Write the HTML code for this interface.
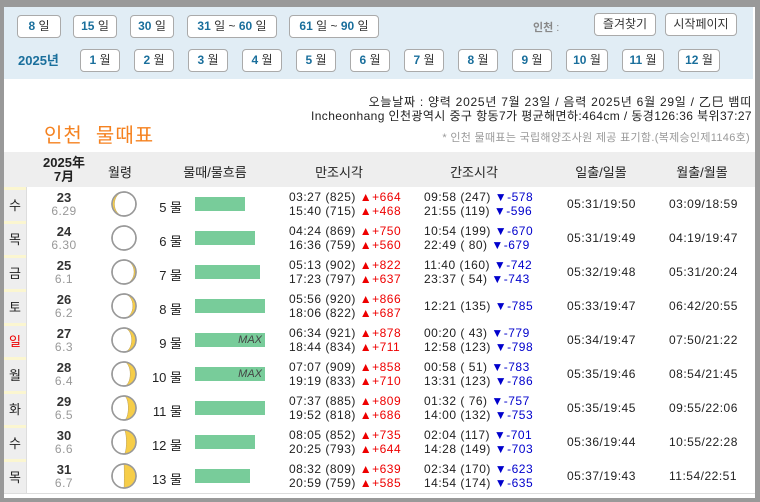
<!DOCTYPE html>
<html><head><meta charset="utf-8"><style>
*{margin:0;padding:0;box-sizing:border-box}
body{width:760px;height:502px;background:#999;position:relative;overflow:hidden;font-family:"Liberation Sans","Noto Sans CJK KR",sans-serif;font-size:12px;color:#222}
.a{position:absolute;white-space:pre}
#wrap{position:absolute;left:4px;top:7px;width:751px;height:491px;background:#fff}
#top{position:absolute;left:0;top:0;width:749px;height:72px;background:#e1edf5}
.b{position:absolute;height:23px;border:1px solid #aaa;border-radius:4px;background:#fff;text-align:center;line-height:21px;font-size:12px;color:#333}
.b b{color:#1a6f9c}
.hdr{position:absolute;left:0;top:145px;width:751px;height:35px;background:#eee}
.dc{position:absolute;left:0;width:22px;height:34px;background:#eee;text-align:center;line-height:32px;font-size:13px;border-top:3px solid #fbf6d0}
.h{position:absolute;text-align:center;font-size:13px;color:#222}
.bar{position:absolute;height:14px;background:#78cc9a;font-style:italic;color:#444;font-size:11px;text-align:right;padding-right:3px;line-height:14px}
.r{color:#e00}.bl{color:#00c}
.t{font-size:12px;letter-spacing:0.5px}
</style></head><body>
<div id="wrap">
<div id="top">
<div class="b" style="left:13px;top:8px;width:44px"><b>8</b> 일</div>
<div class="b" style="left:69px;top:8px;width:44px"><b>15</b> 일</div>
<div class="b" style="left:126px;top:8px;width:44px"><b>30</b> 일</div>
<div class="b" style="left:183px;top:8px;width:90px"><b>31</b> 일 ~ <b>60</b> 일</div>
<div class="b" style="left:285px;top:8px;width:90px"><b>61</b> 일 ~ <b>90</b> 일</div>
<div class="a" style="left:529px;top:12px;color:#888;font-size:11px;font-weight:bold">인천 <span style="font-weight:normal">:</span></div>
<div class="b" style="left:590px;top:6px;width:62px">즐겨찾기</div>
<div class="b" style="left:661px;top:6px;width:72px">시작페이지</div>
<div class="a" style="left:14px;top:43px;color:#1a6f9c;font-weight:bold;font-size:13px">2025년</div>
<div class="b" style="left:76px;top:42px;width:40px"><b>1</b> 월</div>
<div class="b" style="left:130px;top:42px;width:40px"><b>2</b> 월</div>
<div class="b" style="left:184px;top:42px;width:40px"><b>3</b> 월</div>
<div class="b" style="left:238px;top:42px;width:40px"><b>4</b> 월</div>
<div class="b" style="left:292px;top:42px;width:40px"><b>5</b> 월</div>
<div class="b" style="left:346px;top:42px;width:40px"><b>6</b> 월</div>
<div class="b" style="left:400px;top:42px;width:40px"><b>7</b> 월</div>
<div class="b" style="left:454px;top:42px;width:40px"><b>8</b> 월</div>
<div class="b" style="left:508px;top:42px;width:40px"><b>9</b> 월</div>
<div class="b" style="left:562px;top:42px;width:42px"><b>10</b> 월</div>
<div class="b" style="left:618px;top:42px;width:42px"><b>11</b> 월</div>
<div class="b" style="left:674px;top:42px;width:42px"><b>12</b> 월</div>
</div>
<div class="a" style="right:3px;top:86px;font-size:12px;letter-spacing:0.75px">오늘날짜 : 양력 2025년 7월 23일 / 음력 2025년 6월 29일 / 乙巳 뱀띠</div>
<div class="a" style="right:3px;top:100px;font-size:12px;letter-spacing:0.4px">Incheonhang 인천광역시 중구 항동7가 평균해면하:464cm / 동경126:36 북위37:27</div>
<div class="a" style="left:40px;top:112px;font-size:20px;color:#f58220;letter-spacing:1px">인천  물때표</div>
<div class="a" style="right:5px;top:122px;font-size:11px;color:#999;letter-spacing:0.3px">* 인천 물때표는 국립해양조사원 제공 표기함.(복제승인제1146호)</div>
<div class="hdr"></div>
<div class="h" style="left:36px;top:149px;width:48px;font-weight:bold;line-height:14px">2025年<br>7月</div>
<div class="h" style="left:96px;top:155px;width:40px">월령</div>
<div class="h" style="left:166px;top:155px;width:90px">물때/물흐름</div>
<div class="h" style="left:300px;top:155px;width:70px">만조시각</div>
<div class="h" style="left:435px;top:155px;width:70px">간조시각</div>
<div class="h" style="left:562px;top:155px;width:70px">일출/일몰</div>
<div class="h" style="left:663px;top:155px;width:70px">월출/월몰</div>
<div style="position:absolute;left:22px;top:180px;width:1px;height:306px;background:#ddd"></div>
<div style="position:absolute;left:0;top:486px;width:751px;height:1px;background:#ddd"></div>
<div id="rows"></div>
</div>
<script>
var d=[["수","23","6.29",5,50,["03:27 (825)","+664","15:40 (715)","+468"],["09:58 (247)","-578","21:55 (119)","-596"],"05:31/19:50","03:09/18:59",-0.1],
["목","24","6.30",6,60,["04:24 (869)","+750","16:36 (759)","+560"],["10:54 (199)","-670","22:49 ( 80)","-679"],"05:31/19:49","04:19/19:47",0],
["금","25","6.1",7,65,["05:13 (902)","+822","17:23 (797)","+637"],["11:40 (160)","-742","23:37 ( 54)","-743"],"05:32/19:48","05:31/20:24",0.08],
["토","26","6.2",8,70,["05:56 (920)","+866","18:06 (822)","+687"],["12:21 (135)","-785"],"05:33/19:47","06:42/20:55",0.13],
["일","27","6.3",9,70,["06:34 (921)","+878","18:44 (834)","+711"],["00:20 ( 43)","-779","12:58 (123)","-798"],"05:34/19:47","07:50/21:22",0.18],
["월","28","6.4",10,70,["07:07 (909)","+858","19:19 (833)","+710"],["00:58 ( 51)","-783","13:31 (123)","-786"],"05:35/19:46","08:54/21:45",0.24],
["화","29","6.5",11,70,["07:37 (885)","+809","19:52 (818)","+686"],["01:32 ( 76)","-757","14:00 (132)","-753"],"05:35/19:45","09:55/22:06",0.32],
["수","30","6.6",12,60,["08:05 (852)","+735","20:25 (793)","+644"],["02:04 (117)","-701","14:28 (149)","-703"],"05:36/19:44","10:55/22:28",0.4],
["목","31","6.7",13,55,["08:32 (809)","+639","20:59 (759)","+585"],["02:34 (170)","-623","14:54 (174)","-635"],"05:37/19:43","11:54/22:51",0.49]];
var h="";
d.forEach(function(r,i){
var y=180+i*34;
h+='<div class="dc" style="top:'+y+'px;'+(r[0]=="일"?'color:#e00':'')+'">'+r[0]+'</div>';
h+='<div class="a" style="left:36px;top:'+(y+3)+'px;width:48px;text-align:center;font-weight:bold;font-size:13px;color:#333">'+r[1]+'</div>';
h+='<div class="a" style="left:36px;top:'+(y+17)+'px;width:48px;text-align:center;font-size:12px;color:#999;letter-spacing:0.5px">'+r[2]+'</div>';
var k=r[9],p='';
var cx=120,cy=y+17,R=12;
if(k<0){var rx=(1+2*k)*12;p='M'+cx+' '+(cy-R)+' A12 12 0 0 0 '+cx+' '+(cy+R)+' A'+rx+' 12 0 0 1 '+cx+' '+(cy-R)+'Z';}
else if(k>0){var rx=Math.max(0.01,(1-2*k)*12);p='M'+cx+' '+(cy-R)+' A12 12 0 0 1 '+cx+' '+(cy+R)+' A'+rx+' 12 0 0 0 '+cx+' '+(cy-R)+'Z';}
h+='<svg class="a" style="left:0;top:0" width="751" height="491"><circle cx="'+cx+'" cy="'+cy+'" r="12" fill="#fff" stroke="#999" stroke-width="1.5"/>'+(p?'<path d="'+p+'" fill="#f6cd48" stroke="#b9a060" stroke-width="0.5"/>':'')+'<circle cx="'+cx+'" cy="'+cy+'" r="12" fill="none" stroke="#999" stroke-width="1.5"/></svg>';
h+='<div class="a" style="left:130px;top:'+(y+10)+'px;width:48px;text-align:right;font-size:13px">'+r[3]+' 물</div>';
h+='<div class="bar" style="left:191px;top:'+(y+10)+'px;width:'+r[4]+'px">'+(r[3]==9||r[3]==10?'MAX':'')+'</div>';
function tc(a,x,cls,sym){var s='';if(a.length==2){s+='<div class="a t" style="left:'+x+'px;top:'+(y+10)+'px">'+a[0]+' <span class="'+cls+'">'+sym+a[1]+'</span></div>';}else{s+='<div class="a t" style="left:'+x+'px;top:'+(y+3)+'px">'+a[0]+' <span class="'+cls+'">'+sym+a[1]+'</span></div>';s+='<div class="a t" style="left:'+x+'px;top:'+(y+17)+'px">'+a[2]+' <span class="'+cls+'">'+sym+a[3]+'</span></div>';}return s;}
h+=tc(r[5],285,'r','▲');h+=tc(r[6],420,'bl','▼');
h+='<div class="a t" style="left:563px;top:'+(y+10)+'px">'+r[7]+'</div>';
h+='<div class="a t" style="left:665px;top:'+(y+10)+'px">'+r[8]+'</div>';
});
document.getElementById('rows').innerHTML=h;
</script>
</body></html>
